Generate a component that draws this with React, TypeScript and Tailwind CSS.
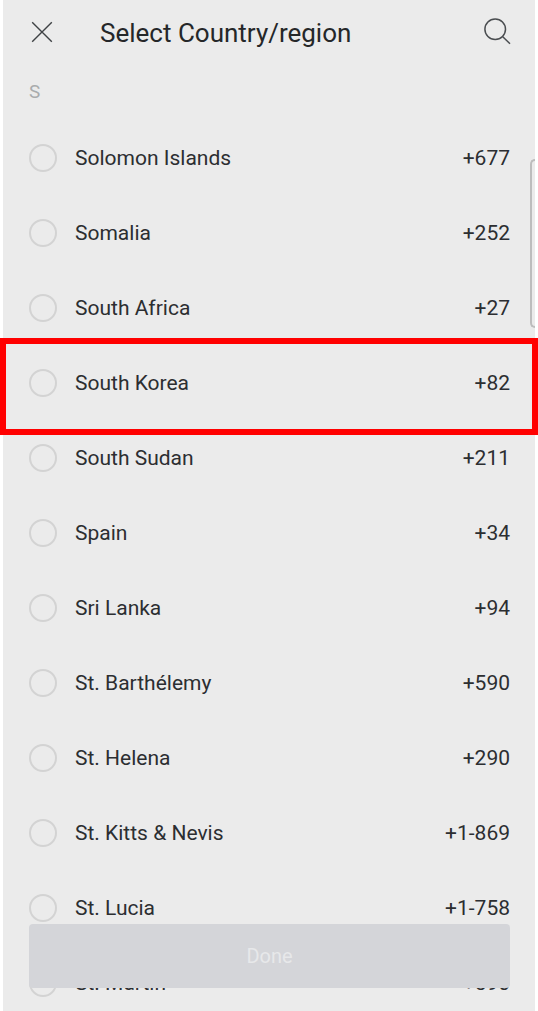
import React, { useState } from 'react';

interface Country {
  name: string;
  code: string;
}

const countries: Country[] = [
  { name: 'Solomon Islands', code: '+677' },
  { name: 'Somalia', code: '+252' },
  { name: 'South Africa', code: '+27' },
  { name: 'South Korea', code: '+82' },
  { name: 'South Sudan', code: '+211' },
  { name: 'Spain', code: '+34' },
  { name: 'Sri Lanka', code: '+94' },
  { name: 'St. Barthélemy', code: '+590' },
  { name: 'St. Helena', code: '+290' },
  { name: 'St. Kitts & Nevis', code: '+1-869' },
  { name: 'St. Lucia', code: '+1-758' },
  { name: 'St. Martin', code: '+590' },
];

const highlighted = 'South Korea';

const Header: React.FC = () => (
  <header className="flex h-[66px] items-center pl-[26px] pr-6">
    <button type="button" aria-label="Close" className="h-7 w-[26px]">
      <svg viewBox="0 0 26 28" className="h-7 w-[26px]" fill="none" stroke="#3f4245" strokeWidth="1.4">
        <path d="M3.2 3.2 L22.8 22.8 M22.8 3.2 L3.2 22.8" />
      </svg>
    </button>
    <h1 className="ml-[45px] flex-1 text-[26px] leading-8 text-[#252729]">Select Country/region</h1>
    <button type="button" aria-label="Search" className="size-7">
      <svg viewBox="0 0 28 28" className="size-7 overflow-visible" fill="none" stroke="#4a4d50" strokeWidth="1.5">
        <circle cx="12.2" cy="10.3" r="10.3" />
        <path d="M19.5 17.5 L27 24.7" />
      </svg>
    </button>
  </header>
);

const App: React.FC = () => {
  const [selected, setSelected] = useState<string | null>(null);

  return (
    <div className="relative h-screen overflow-hidden bg-white px-[3px] font-[Roboto,sans-serif]">
      <div className="min-h-full bg-[#ebebeb]">
        <Header />
        <h2 className="h-[54px] px-[26px] pt-[14px] text-[19px] leading-6 text-[#a9abad]">S</h2>
        <ul>
          {countries.map((country) => (
            <li key={country.name} className="relative">
              <label className="flex h-[75px] items-center pl-[26px] pr-[25px] text-[21px] leading-7 text-[#2c2e31]">
                <input
                  type="radio"
                  name="country"
                  value={country.name}
                  checked={selected === country.name}
                  onChange={() => setSelected(country.name)}
                  className="size-7 shrink-0 appearance-none rounded-full border-2 border-[#d3d3d3] checked:border-8 checked:border-blue-500"
                />
                <span className="ml-[18px] flex-1">{country.name}</span>
                <span>{country.code}</span>
              </label>
              {country.name === highlighted && (
                <div className="pointer-events-none absolute -inset-x-[3px] -top-[7px] -bottom-[15px] border-6 border-[#ff0000]" />
              )}
            </li>
          ))}
        </ul>
      </div>

      {/* edge panel handle */}
      <div className="absolute right-[3px] top-[159px] h-[169px] w-[5px] rounded-l-md border-2 border-r-0 border-[#bdbdbd]" />

      <div className="absolute left-[29px] right-[28px] bottom-[23px]">
        <button
          type="button"
          disabled={!selected}
          className="h-16 w-full rounded bg-blue-500 text-xl text-white disabled:bg-[#d4d5d9] disabled:text-[#e7e8ea]"
        >
          Done
        </button>
      </div>
    </div>
  );
};

export default App;
